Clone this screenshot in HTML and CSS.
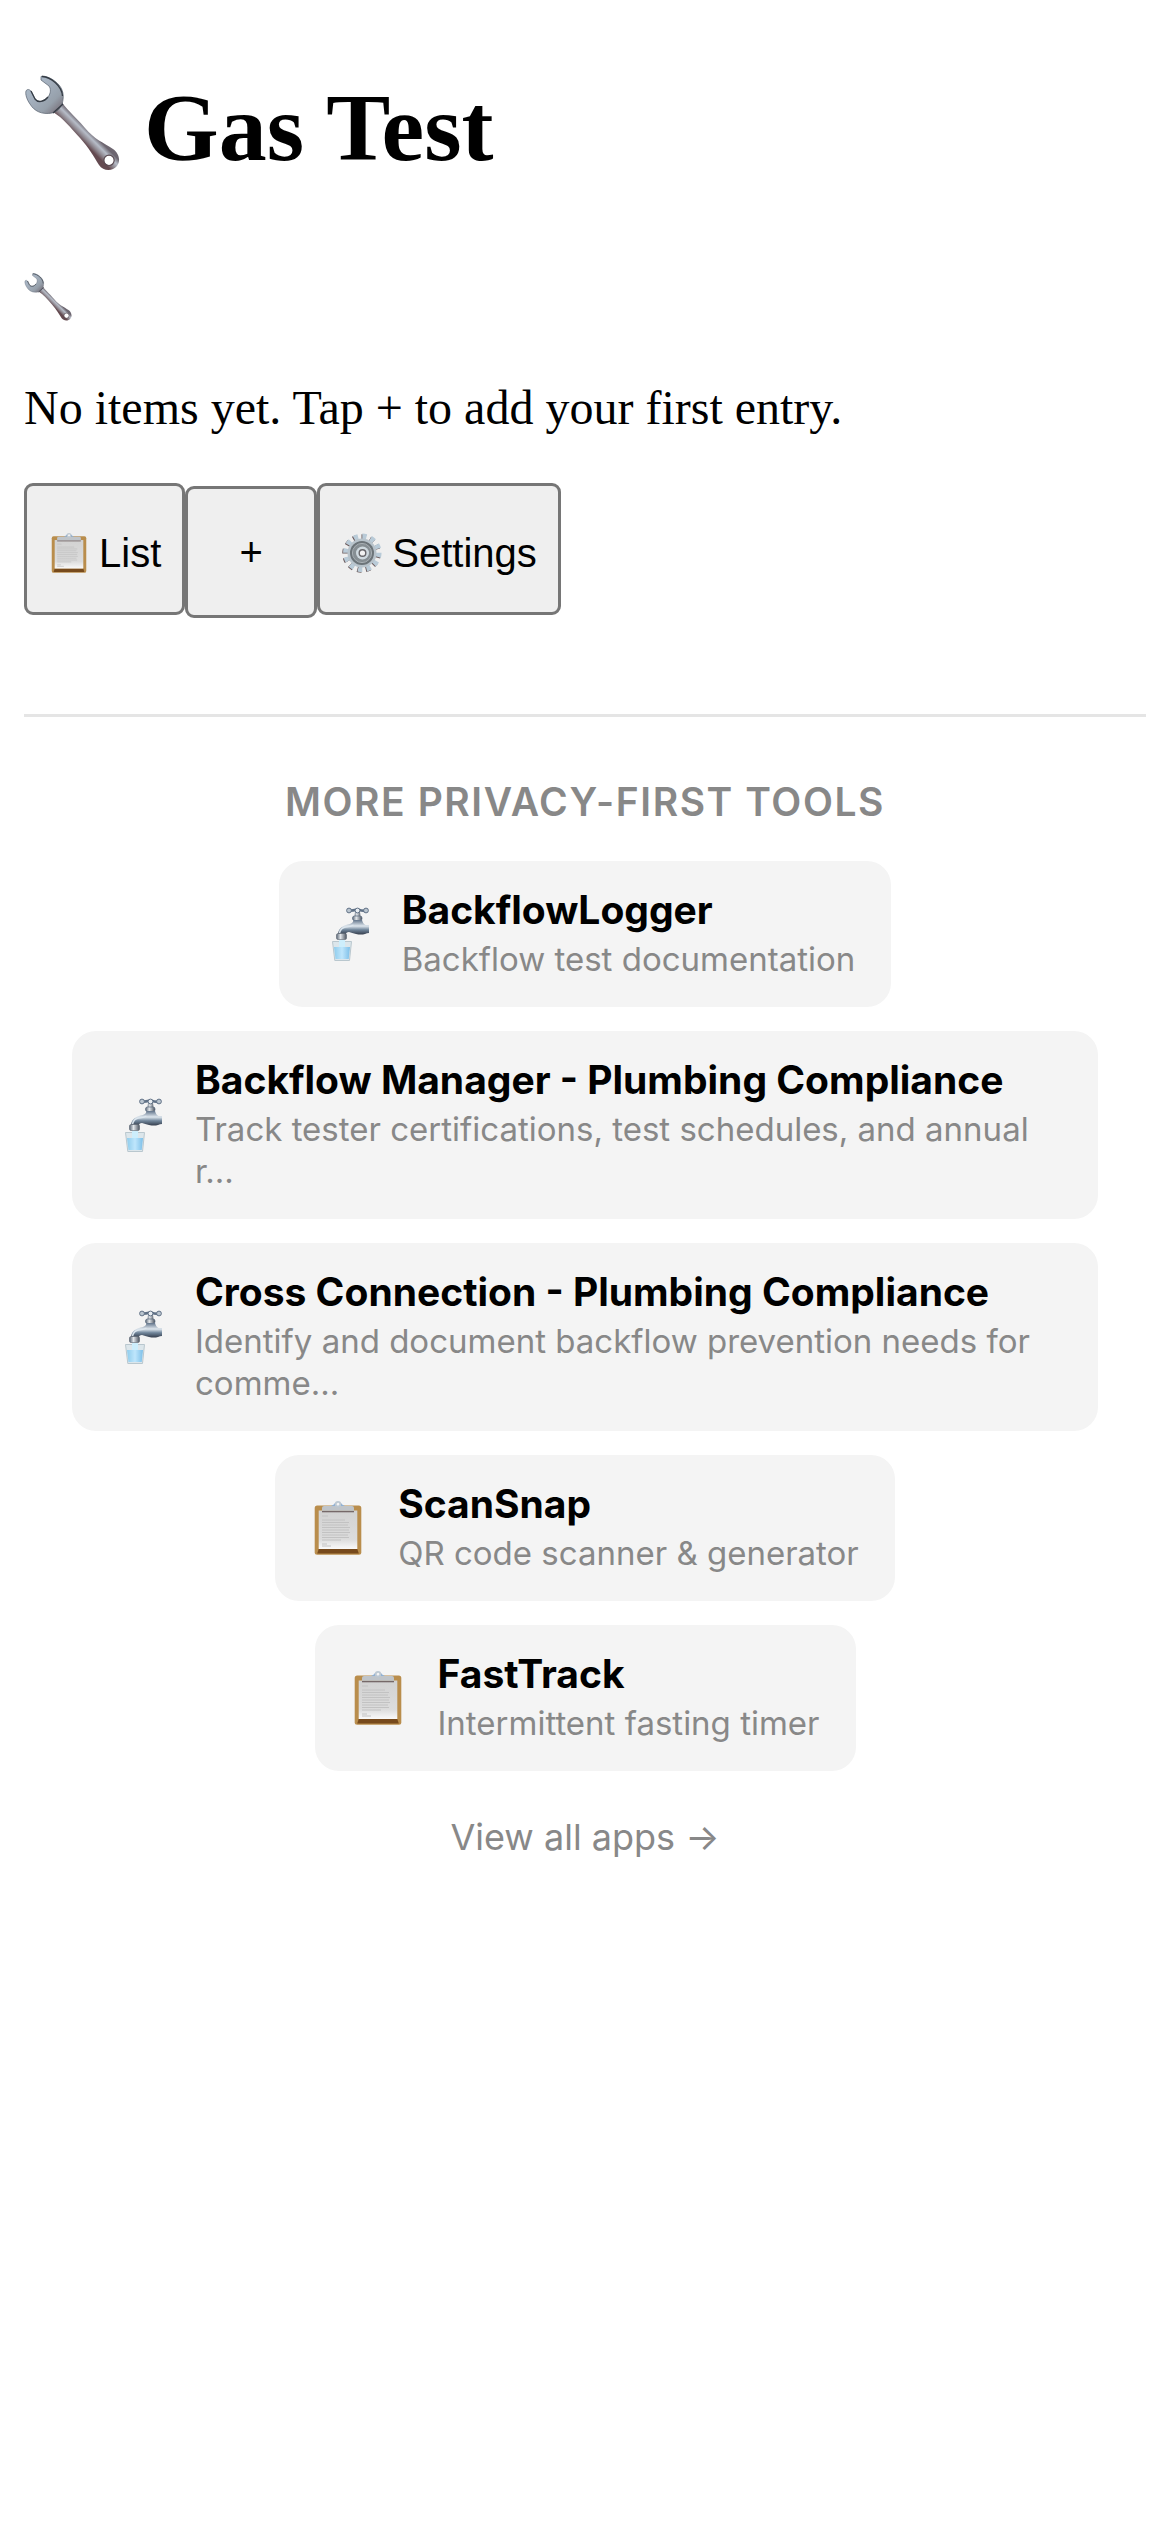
FILE: index.html
```html
<!DOCTYPE html>
<html lang="en">
<head>
<meta charset="utf-8">
<meta name="viewport" content="width=device-width, initial-scale=1">
<title>Gas Test</title>
<link rel="stylesheet" href="styles.css">
</head>
<body>
<svg class="sprite" aria-hidden="true">
  <defs>
    <linearGradient id="steel" x1="0" y1="0" x2="1" y2="1">
      <stop offset="0" stop-color="#a9bccb"/><stop offset=".35" stop-color="#a6b2c0"/><stop offset=".7" stop-color="#96a0ab"/><stop offset="1" stop-color="#6d5f68"/>
    </linearGradient>
    <linearGradient id="shaft" gradientUnits="userSpaceOnUse" x1="62" y1="52" x2="53" y2="61">
      <stop offset="0" stop-color="#6d6670"/><stop offset=".35" stop-color="#b7bdc8"/><stop offset=".7" stop-color="#8d868e"/><stop offset="1" stop-color="#644a50"/>
    </linearGradient>
    <linearGradient id="pipe" x1="0" y1="0" x2="0" y2="1">
      <stop offset="0" stop-color="#62748a"/><stop offset=".4" stop-color="#dfe7ee"/><stop offset=".65" stop-color="#71869b"/><stop offset="1" stop-color="#2f3644"/>
    </linearGradient>
    <linearGradient id="nozzle"><stop offset="0" stop-color="#596574"/><stop offset=".4" stop-color="#e2e6ea"/><stop offset="1" stop-color="#4b535f"/></linearGradient>
    <linearGradient id="water"><stop offset="0" stop-color="#8fccec"/><stop offset=".5" stop-color="#bfe6fc"/><stop offset="1" stop-color="#7dbfe8"/></linearGradient>
    <linearGradient id="paper" x1="0" y1="0" x2="0" y2="1"><stop offset="0" stop-color="#d2d2d2"/><stop offset=".75" stop-color="#dcdcdc"/><stop offset="1" stop-color="#fafafa"/></linearGradient>
    <symbol id="wrench" viewBox="0 0 96 96">
      <path fill="url(#shaft)" d="M38 27C40 32 50 40 61 53C70 64 80 68 89 74C95 78 97 86 93 91C88 97 79 96 75 90C70 82 65 73 56 63C46 52 39 43 29 37ZM85 80.500a4.800 4.800 0 1 0 .1 0Z" fill-rule="evenodd"/>
      <path fill="url(#steel)" stroke="#56606d" stroke-width=".7" d="M17 1.500C21 0 30 4 35 10C40 16 40 23 38 29C36 34 33 37 28 38C18 40 10 36 6 29C3 25 1 19 2 16C3 14 5 14 7 16L11 24C14 28 20 27 24 22C27 18 27 14 25 11L17 5Z"/>
      <path fill="none" stroke="#343b44" stroke-width="1.300" d="M18 1.500C27 2 38 11 38.500 21M7 16L11 24C14 28 20 27 24 22M39 29L29 38"/>
      <circle cx="85" cy="85.300" r="5.200" fill="none" stroke="#5b4b52" stroke-width="1.200"/>
    </symbol>
    <symbol id="clipboard" viewBox="0 0 54 54">
      <rect x="3.700" y="4.500" width="46.600" height="49.300" rx="2.500" fill="#b98d4c"/>
      <path d="M7.700 48h38.600l1.500 4.500H6.200z" fill="#774a1c"/>
      <rect x="7.700" y="9.500" width="38.600" height="38.500" fill="url(#paper)"/>
      <path d="M11 15h6M11 19h23M11 21.500h27M11 24h26M11 26.500h28M11 29h27M11 31.500h28M11 34h26M11 36.500h27M11 39h19M11 43h5M11 45h9" stroke="#c2c2c2" stroke-width="1"/>
      <path d="M11 10.600h32" stroke="#766969" stroke-width="1.400"/>
      <path d="M11 9.800V7q0-2 2-2h28q2 0 2 2v2.800z" fill="#bfc4c9"/>
      <path d="M20 5q3-1 4-3h6q1 2 4 3z" fill="#8fb0d4"/>
      <circle cx="27" cy="3.200" r="2.300" fill="#f4f4f4" stroke="#bdc8d2" stroke-width="1.800"/>
    </symbol>
    <symbol id="faucet" viewBox="0 0 54 54">
      <path d="M40 5h5l1 9h-7z" fill="url(#nozzle)"/>
      <path d="M34 3.800q4 0 8.500-1.200Q47 4 51 3.800" fill="none" stroke="#607186" stroke-width="2.600"/>
      <circle cx="34" cy="3.500" r="2.400" fill="#bac5cf" stroke="#627287"/>
      <circle cx="51" cy="3.500" r="2.400" fill="#bac5cf" stroke="#627287"/>
      <circle cx="42.500" cy="3.500" r="2.400" fill="#e8edf1" stroke="#627287"/>
      <rect x="37.500" y="9" width="9.500" height="4.500" rx="2" fill="url(#nozzle)" stroke="#56677c" stroke-width=".7"/>
      <path d="M38.500 13h8.500q1 4 3.500 5h3.500v8q-2 0-4 1-4 1-9 0-4-1-7-2-3 0-3.500 3h-7.500c0-6 4-9 8-10 5-1 7-2 7.500-5z" fill="url(#pipe)"/>
      <path d="M24.500 26q1-5 6-6 5 0 8-2" fill="none" stroke="#dce6ee" stroke-width="1.500"/>
      <rect x="21.500" y="26.500" width="10" height="6" rx="1.500" fill="url(#nozzle)" stroke="#5a6470" stroke-width=".6"/>
      <path d="M17.500 34.500h19l-2 19H19.800z" fill="#dce6eb" stroke="#b9c7ce"/>
      <path d="M19 40h16l-1.300 12H20.500z" fill="url(#water)"/>
      <path d="M24 33h6v7h-6z" fill="#cdeefc"/>
    </symbol>
    <symbol id="gear" viewBox="0 0 40 40">
      <circle cx="19.500" cy="20.500" r="16" fill="none" stroke="#6b5a5c" stroke-width="6.500" pathLength="24" stroke-dasharray="1 1"/>
      <circle cx="20.300" cy="19.800" r="16" fill="none" stroke="#b9cbd8" stroke-width="6.500" pathLength="24" stroke-dasharray="1 1"/>
      <circle cx="20" cy="20" r="14.500" fill="#b8c3cb"/>
      <circle cx="20" cy="20" r="12" fill="#6c7479"/>
      <circle cx="20" cy="20" r="9.600" fill="#868e93" stroke="#a8afb4"/>
      <circle cx="20.500" cy="20" r="6.500" fill="#cfd9df"/>
      <circle cx="20.500" cy="20" r="3.300" fill="#f2f2f2" stroke="#67666a" stroke-width="1.400"/>
    </symbol>
  </defs>
</svg>

<header>
  <h1 class="title"><svg class="icon-title" aria-hidden="true"><use href="#wrench"/></svg>Gas Test</h1>
</header>
<main>
  <svg class="icon-empty" aria-hidden="true"><use href="#wrench"/></svg>
  <p class="empty-text">No items yet. Tap + to add your first entry.</p>
</main>
<nav class="toolbar">
  <button class="tool" type="button"><svg class="icon-tool" aria-hidden="true"><use href="#clipboard"/></svg>List</button>
  <button class="tool tool-add" type="button">+</button>
  <button class="tool" type="button"><svg class="icon-tool" aria-hidden="true"><use href="#gear"/></svg>Settings</button>
</nav>
<footer class="more">
  <h2 class="more-title">More Privacy-First Tools</h2>
  <div class="apps">
    <a class="app" href="#backflowlogger"><svg class="icon-app" aria-hidden="true"><use href="#faucet"/></svg><span class="app-text"><span class="app-name">BackflowLogger</span><span class="app-note">Backflow test documentation</span></span></a>
    <a class="app" href="#backflow-manager"><svg class="icon-app" aria-hidden="true"><use href="#faucet"/></svg><span class="app-text"><span class="app-name">Backflow Manager - Plumbing Compliance</span><span class="app-note">Track tester certifications, test schedules, and annual r...</span></span></a>
    <a class="app" href="#cross-connection"><svg class="icon-app" aria-hidden="true"><use href="#faucet"/></svg><span class="app-text"><span class="app-name">Cross Connection - Plumbing Compliance</span><span class="app-note">Identify and document backflow prevention needs for comme...</span></span></a>
    <a class="app" href="#scansnap"><svg class="icon-app" aria-hidden="true"><use href="#clipboard"/></svg><span class="app-text"><span class="app-name">ScanSnap</span><span class="app-note">QR code scanner &amp; generator</span></span></a>
    <a class="app" href="#fasttrack"><svg class="icon-app" aria-hidden="true"><use href="#clipboard"/></svg><span class="app-text"><span class="app-name">FastTrack</span><span class="app-note">Intermittent fasting timer</span></span></a>
  </div>
  <a class="all" href="#apps">View all apps →</a>
</footer>
</body>
</html>
```
FILE: styles.css
```css
* { box-sizing: border-box; }

body {
  margin: 0;
  padding: 75px 24px 24px;
  background: #fff;
  color: #000;
  font-family: "Liberation Serif", "Times New Roman", serif;
  font-size: 48px;
}

.sprite { position: absolute; width: 0; height: 0; }

.title {
  display: flex;
  align-items: flex-start;
  gap: 24px;
  margin: 0 0 92px;
  font-size: 96px;
  line-height: 106px;
}

.icon-title { width: 96px; height: 96px; flex: none; }
.icon-empty { display: block; width: 48px; height: 48px; }

.empty-text { margin: 60px 0 48px; line-height: 54px; }

.toolbar { display: flex; align-items: flex-start; min-height: 135px; }

.tool {
  display: flex;
  align-items: center;
  justify-content: center;
  gap: 10px;
  height: 132px;
  padding: 8px 21px 0 22px;
  border: 3px solid #767676;
  border-radius: 9px;
  background: #efefef;
  color: #000;
  font-family: "Liberation Sans", Arial, sans-serif;
  font-size: 40px;
}

.tool-add { align-self: flex-end; min-width: 132px; padding: 0; }
.icon-tool { width: 40px; height: 40px; flex: none; }

.more {
  display: flex;
  flex-direction: column;
  align-items: center;
  margin-top: 96px;
  padding: 61px 48px;
  border-top: 3px solid #e5e5e5;
  color: #888;
  font-family: Inter, sans-serif;
}

.more-title {
  margin: 0 0 35px;
  font-size: 39px;
  font-weight: 600;
  line-height: 48px;
  letter-spacing: 0.04em;
  text-transform: uppercase;
}

.apps { display: flex; flex-direction: column; align-items: center; gap: 24px; }

.app {
  display: flex;
  align-items: center;
  gap: 33px;
  padding: 26px 36px 27px;
  border-radius: 24px;
  background: #f4f4f4;
  color: inherit;
  text-decoration: none;
}

.icon-app { width: 54px; height: 54px; flex: none; }
.app-text { display: flex; flex-direction: column; gap: 5px; }
.app-name { color: #000; font-size: 39px; font-weight: 700; line-height: 46px; }
.app-note { font-size: 33px; line-height: 42px; }

.all { margin-top: 44px; color: inherit; font-size: 36px; line-height: 44px; text-decoration: none; }
```
